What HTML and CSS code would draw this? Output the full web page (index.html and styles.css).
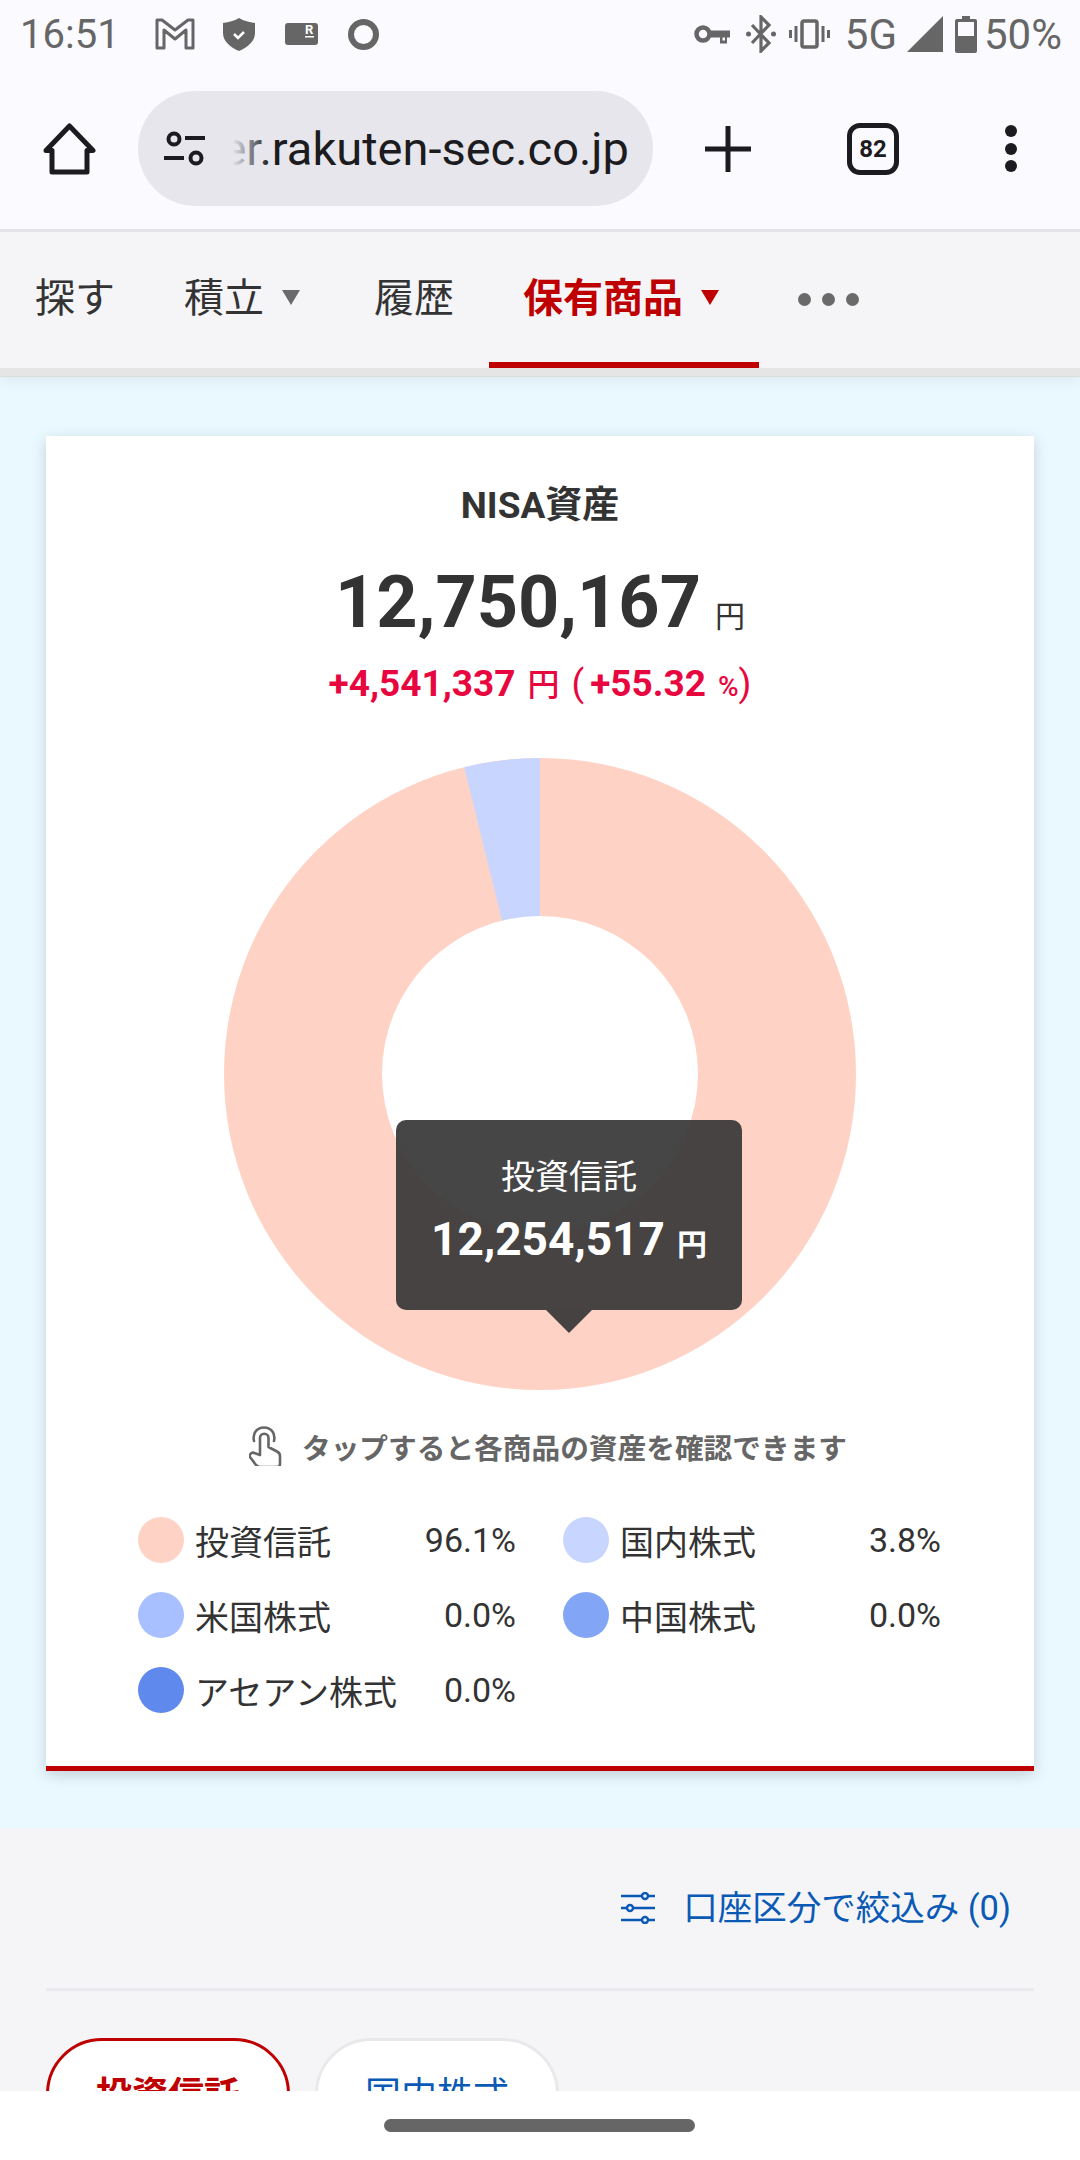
FILE: index.html
```html
<!DOCTYPE html>
<html lang="ja">
<head>
    <meta charset="utf-8">
    <title>NISA資産</title>
    <link rel="stylesheet" href="styles.css">
</head>
<body>
<div class="status">
    <span class="time">16:51</span>
    <svg class="ic-gmail" width="40" height="32" viewBox="0 0 40 32"><path d="M2 2h5l13 10L33 2h5v28h-7V12l-11 9-11-9v18H2z" fill="none" stroke="#666" stroke-width="3" stroke-linejoin="round"/></svg>
    <svg class="ic-shield" width="32" height="33" viewBox="0 0 32 33"><path d="M16 0c5 3 10 4 16 5v10c0 8-7 14-16 18C7 29 0 23 0 15V5c6-1 11-2 16-5z" fill="#666"/><path d="M11 16l4 4 6-6" fill="none" stroke="#fff" stroke-width="2.5"/></svg>
    <svg class="ic-card" width="33" height="23" viewBox="0 0 33 23"><rect width="33" height="22" rx="3" fill="#666"/><text x="20" y="11" class="ic-card-r">R</text><rect x="20" y="13" width="9" height="1.5" fill="#fff"/></svg>
    <svg class="ic-ring" width="31" height="31" viewBox="0 0 31 31"><circle cx="15.5" cy="15.5" r="12.5" fill="none" stroke="#666" stroke-width="6"/></svg>
    <span class="status-space"></span>
    <svg class="ic-key" width="36" height="20" viewBox="0 0 36 20"><circle cx="9" cy="10" r="6.500" fill="none" stroke="#666" stroke-width="4.500"/><path d="M15 6.500h21v7h-3v6h-7v-6H15z" fill="#666"/><rect x="28.500" y="13.500" width="2.500" height="3" fill="#fbfaff"/></svg>
    <svg class="ic-bt" width="30" height="38" viewBox="0 0 30 38"><path d="M6 10l17 18-8 8V2l8 8L6 28" fill="none" stroke="#666" stroke-width="3.200"/><circle cx="2.5" cy="19" r="2.5" fill="#666"/><circle cx="27.5" cy="19" r="2.5" fill="#666"/></svg>
    <svg class="ic-vib" width="41" height="30" viewBox="0 0 41 30"><rect x="13" y="2" width="15" height="26" rx="2" fill="none" stroke="#666" stroke-width="3.500"/><path d="M7 7v16M1.500 11v8M34 7v16M39.500 11v8" stroke="#666" stroke-width="3"/></svg>
    <span class="net">5G</span>
    <svg class="ic-signal" width="36" height="36" viewBox="0 0 36 36"><path d="M36 0v36H0z" fill="#666"/></svg>
    <svg class="ic-batt" width="22" height="37" viewBox="0 0 22 37"><path d="M7 0h8v3h5a2 2 0 0 1 2 2v30a2 2 0 0 1-2 2H2a2 2 0 0 1-2-2V5a2 2 0 0 1 2-2h5z" fill="#666"/><rect x="3" y="6" width="16" height="14" fill="#fbfaff"/></svg>
    <span class="batt-text">50%</span>
</div>

<div class="toolbar">
    <svg class="ic-home" width="53" height="52" viewBox="0 0 53 52"><path d="M3 27.500L26.500 3 50 27.500h-6V49H9V27.500z" fill="none" stroke="#1b1b20" stroke-width="5" stroke-linejoin="round"/></svg>
    <div class="urlbar">
        <svg class="ic-tune" width="43" height="35" viewBox="0 0 43 35"><circle cx="11" cy="8" r="5.500" fill="none" stroke="#1b1b20" stroke-width="4"/><path d="M22 7h20M1 27h20" stroke="#1b1b20" stroke-width="4"/><circle cx="33" cy="27" r="5.500" fill="none" stroke="#1b1b20" stroke-width="4"/></svg>
        <div class="url"><span>er.rakuten-sec.co.jp</span></div>
    </div>
    <svg class="ic-plus" width="46" height="46" viewBox="0 0 46 46"><path d="M23 1v44M0 23h46" stroke="#1b1b20" stroke-width="5" stroke-linecap="round"/></svg>
    <div class="tabcount">82</div>
    <svg class="ic-more" width="12" height="47" viewBox="0 0 12 47"><circle cx="6" cy="6" r="6" fill="#1b1b20"/><circle cx="6" cy="24" r="6" fill="#1b1b20"/><circle cx="6" cy="41" r="6" fill="#1b1b20"/></svg>
</div>

<nav class="nav">
    <a class="tab">探す</a>
    <a class="tab tab-tsumi">積立<i class="caret"></i></a>
    <a class="tab">履歴</a>
    <a class="tab tab-active">保有商品<i class="caret"></i></a>
    <span class="nav-dots"><i></i><i></i><i></i></span>
</nav>

<main class="main">
    <section class="summary">
        <div class="card">
            <h2 class="card-title">NISA資産</h2>
            <p class="total">12,750,167<span class="yen">円</span></p>
            <p class="delta">+4,541,337<span class="delta-unit">円</span><span class="delta-paren">(</span>+55.32<span class="delta-pct">%</span><span class="delta-close">)</span></p>

            <div class="chart">
                <svg width="632" height="632" viewBox="0 0 632 632">
                    <circle cx="316" cy="316" r="316" fill="#ffd2c6"/>
                    <path d="M316 316L240.100 9.200A316 316 0 0 1 316 0z" fill="#c8d6ff"/>
                    <circle cx="316" cy="316" r="158" fill="#fff"/>
                </svg>
                <div class="tip">
                    <div class="tip-name">投資信託</div>
                    <div class="tip-val">12,254,517<span class="tip-yen">円</span></div>
                </div>
            </div>

            <p class="hint">
                <svg width="33" height="40" viewBox="11 8 33 40"><path d="M16 23C14 14 20 9.500 26 9.500S38 14 36 23" fill="none" stroke="#666" stroke-width="2.600" stroke-linecap="round"/><path d="M22 37V20a4.200 4.200 0 0 1 8.500 0v9l8.500 4.500c2 1 3 2 3 4.500v8c0 2-1 3-3 3H22c-1.500 0-2.500-.5-4-2l-6-8c-1-1.500.5-4 3-4.500z" fill="none" stroke="#666" stroke-width="2.600" stroke-linejoin="round"/></svg>
                <span>タップすると各商品の資産を確認できます</span>
            </p>

            <ul class="legend">
                <li><i class="dot c1"></i><span class="name">投資信託</span><span class="pct">96.1%</span></li>
                <li><i class="dot c2"></i><span class="name">国内株式</span><span class="pct">3.8%</span></li>
                <li><i class="dot c3"></i><span class="name">米国株式</span><span class="pct">0.0%</span></li>
                <li><i class="dot c4"></i><span class="name">中国株式</span><span class="pct">0.0%</span></li>
                <li><i class="dot c5"></i><span class="name">アセアン株式</span><span class="pct">0.0%</span></li>
            </ul>
        </div>
    </section>

    <section class="holdings">
        <div class="filter">
            <svg width="34" height="32" viewBox="0 0 34 32"><path d="M0 4h34M0 16h34M0 28h34" stroke="#0a5ab5" stroke-width="2.600"/><circle cx="24" cy="4" r="3" fill="#f5f5f8" stroke="#0a5ab5" stroke-width="2.400"/><circle cx="9" cy="16" r="3" fill="#f5f5f8" stroke="#0a5ab5" stroke-width="2.400"/><circle cx="24" cy="28" r="3" fill="#f5f5f8" stroke="#0a5ab5" stroke-width="2.400"/></svg>
            <span>口座区分で絞込み (0)</span>
        </div>
        <div class="pills">
            <a class="pill pill-on">投資信託</a>
            <a class="pill">国内株式</a>
        </div>
    </section>
</main>

<div class="gesture"><span></span></div>
</body>
</html>
```

FILE: styles.css
```css
* {
    box-sizing: border-box;
}
html, body {
    margin: 0;
    padding: 0;
}
body {
    width: 1080px;
    height: 2160px;
    display: flex;
    flex-direction: column;
    overflow: hidden;
    background-color: #fff;
    color: #333;
    font-family: Roboto, "Noto Sans CJK JP", sans-serif;
}
p, h2, ul {
    margin: 0;
    padding: 0;
}

/* status bar */
.status {
    height: 68px;
    display: flex;
    align-items: center;
    padding: 0 18px 0 20px;
    background-color: #fbfaff;
    color: #666;
    flex-shrink: 0;
}
.time {
    font-size: 40px;
    width: 98px;
    margin-right: 37px;
}
.ic-gmail { margin-right: 28px; }
.ic-shield { margin-right: 30px; }
.ic-card { margin-right: 30px; }
.ic-card-r {
    font-size: 13px;
    font-weight: 700;
    fill: #fff;
    font-family: Roboto, sans-serif;
}
.status-space { flex: 1; }
.ic-key { margin-right: 16px; }
.ic-bt { margin-right: 13px; }
.ic-vib { margin-right: 15px; }
.net {
    font-size: 42px;
    margin-right: 10px;
}
.ic-signal { margin-right: 12px; }
.ic-batt { margin-right: 7px; }
.batt-text { font-size: 42px; }

/* browser toolbar */
.toolbar {
    height: 161px;
    display: flex;
    align-items: center;
    padding-left: 43px;
    background-color: #fbfaff;
    flex-shrink: 0;
}
.urlbar {
    width: 515px;
    height: 115px;
    margin-left: 42px;
    padding: 0 24px 0 25px;
    display: flex;
    align-items: center;
    border-radius: 58px;
    background-color: #e7e6ec;
}
.url {
    flex: 1;
    position: relative;
    overflow: hidden;
    display: flex;
    justify-content: flex-end;
    white-space: nowrap;
    margin-left: 14px;
    font-size: 47px;
    color: #1b1b20;
}
.url::before {
    content: "";
    position: absolute;
    left: 0;
    top: 0;
    bottom: 0;
    width: 50px;
    background: linear-gradient(to right, #e7e6ec 25%, rgba(231, 230, 236, 0));
}
.ic-plus { margin-left: 52px; }
.tabcount {
    width: 52px;
    height: 52px;
    margin-left: 96px;
    display: flex;
    align-items: center;
    justify-content: center;
    border: 5px solid #1b1b20;
    border-radius: 13px;
    font-size: 24px;
    font-weight: 700;
    color: #1b1b20;
}
.ic-more { margin-left: 106px; }

/* page tabs */
.nav {
    height: 139px;
    display: flex;
    align-items: stretch;
    flex-shrink: 0;
    background-color: #f5f5f8;
    border-top: 3px solid #e4e3ea;
    position: relative;
    z-index: 2;
    box-shadow: 0 8px 0 #e5e5e5, 0 9px 0 #dcdcdc, 0 12px 14px rgba(0, 0, 0, 0.07);
}
.tab {
    display: flex;
    align-items: center;
    padding: 0 35px 10px;
    font-size: 40px;
    color: #333;
}
.tab-tsumi {
    padding-left: 34px;
    padding-right: 39px;
}
.tab-active {
    padding-left: 34px;
    padding-right: 40px;
    font-weight: 700;
    color: #bf0000;
    border-bottom: 6px solid #bf0000;
    padding-bottom: 4px;
}
.caret {
    width: 0;
    height: 0;
    margin-top: 5px;
    margin-left: 18px;
    border-left: 9px solid transparent;
    border-right: 9px solid transparent;
    border-top: 15px solid #6a6a6a;
}
.tab-active .caret {
    border-top-color: #bf0000;
}
.nav-dots {
    display: flex;
    align-items: center;
    gap: 11px;
    margin-left: 39px;
    padding-bottom: 2px;
}
.nav-dots i {
    width: 13px;
    height: 13px;
    border-radius: 50%;
    background-color: #6a6a6a;
}

/* main */
.main {
    flex: 1;
    overflow: hidden;
    background-color: #f5f5f8;
}
.summary {
    height: 1460px;
    padding: 68px 46px 0;
    background-color: #e9f9ff;
}
.card {
    height: 1335px;
    padding-top: 48px;
    background-color: #fff;
    border-bottom: 5px solid #bf0000;
    box-shadow: 0 4px 14px rgba(0, 0, 0, 0.16);
}
.card-title {
    font-size: 37px;
    line-height: 44px;
    font-weight: 700;
    text-align: center;
}
.total {
    margin-top: 33px;
    font-size: 72px;
    line-height: 84px;
    font-weight: 700;
    text-align: center;
}
.yen {
    margin-left: 14px;
    font-size: 30px;
    font-weight: 400;
}
.delta {
    margin-top: 5px;
    font-size: 37px;
    line-height: 40px;
    font-weight: 700;
    color: #e8063f;
    text-align: center;
}
.delta-unit {
    margin-left: 12px;
    font-size: 32px;
    font-weight: 500;
}
.delta-paren {
    margin-left: 12px;
    margin-right: 6px;
    font-weight: 400;
}
.delta-pct {
    margin-left: 12px;
    font-size: 28px;
    font-weight: 500;
}
.delta-close { font-weight: 400; }

.chart {
    position: relative;
    width: 632px;
    height: 632px;
    margin: 51px auto 0;
}
.chart svg {
    display: block;
}
.tip {
    position: absolute;
    left: 172px;
    top: 362px;
    width: 346px;
    height: 190px;
    padding-top: 34px;
    border-radius: 10px;
    background-color: rgba(56, 56, 56, 0.93);
    color: #fff;
    text-align: center;
}
.tip::after {
    content: "";
    position: absolute;
    left: 150px;
    top: 100%;
    border-left: 23px solid transparent;
    border-right: 23px solid transparent;
    border-top: 23px solid #454241;
}
.tip-name {
    font-size: 34px;
    line-height: 46px;
}
.tip-val {
    margin-top: 12px;
    font-size: 46px;
    line-height: 54px;
    font-weight: 700;
}
.tip-yen {
    margin-left: 12px;
    font-size: 30px;
    font-weight: 700;
}

.hint {
    display: flex;
    align-items: center;
    justify-content: center;
    gap: 20px;
    height: 40px;
    margin-top: 36px;
    padding-left: 16px;
    font-size: 28.700px;
    font-weight: 700;
    color: #666;
}
.legend {
    list-style: none;
    display: grid;
    grid-template-columns: 378px 378px;
    column-gap: 47px;
    row-gap: 29px;
    margin: 51px 0 0 92px;
}
.legend li {
    height: 46px;
    display: flex;
    align-items: center;
    font-size: 34px;
}
.dot {
    width: 46px;
    height: 46px;
    border-radius: 50%;
    margin-right: 11px;
}
.c1 { background-color: #ffd2c6; }
.c2 { background-color: #c8d6ff; }
.c3 { background-color: #a8c0ff; }
.c4 { background-color: #82a6f5; }
.c5 { background-color: #6089ee; }
.name {
    flex: 1;
}

/* holdings */
.holdings {
    padding: 0 46px;
}
.filter {
    height: 163px;
    padding: 58px 0 0;
    display: flex;
    justify-content: flex-end;
    gap: 28px;
    border-bottom: 3px solid #eaeaee;
    font-size: 34.500px;
    line-height: 44px;
    color: #0a5ab5;
}
.filter svg {
    margin-top: 6px;
}
.filter span {
    margin-right: 23px;
}
.pills {
    display: flex;
    gap: 25px;
    margin-top: 47px;
}
.pill {
    width: 244px;
    height: 130px;
    padding-top: 30px;
    border: 3px solid #e9e9ec;
    border-radius: 56px;
    background-color: #fff;
    color: #0a5ab5;
    font-size: 36px;
    line-height: 50px;
    text-align: center;
}
.pill-on {
    border-color: #bf0000;
    color: #bf0000;
    font-weight: 700;
}

.gesture {
    height: 69px;
    flex-shrink: 0;
    padding: 28px 0 0 384px;
    background-color: #fff;
    position: relative;
    z-index: 2;
}
.gesture span {
    display: block;
    width: 311px;
    height: 13px;
    border-radius: 7px;
    background-color: #666;
}
```
